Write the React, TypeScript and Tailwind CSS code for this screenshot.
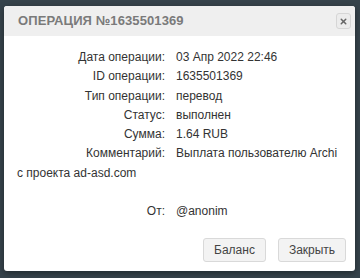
import { X } from "lucide-react";

export default function App() {
  const rows = [
    { label: "Дата операции:", value: "03 Апр 2022 22:46" },
    { label: "ID операции:", value: "1635501369" },
    { label: "Тип операции:", value: "перевод" },
    { label: "Статус:", value: "выполнен" },
    { label: "Сумма:", value: "1.64 RUB" },
    { label: "Комментарий:", value: "Выплата пользователю Archi с проекта ad-asd.com" },
  ];

  return (
    <div className="w-[360px] h-[278px] bg-[#36434b] pt-[6px] pl-[4px] overflow-hidden" style={{ fontFamily: '"Liberation Sans", Arial, sans-serif' }}>
      <div className="w-[351px] h-[265px] bg-white rounded-[3px] flex flex-col shadow-[0_2px_6px_rgba(0,0,0,0.4)]">
        <div className="h-[30px] bg-[#efefef] rounded-t-[3px] flex items-center justify-between pl-[14px] pr-[4px]">
          <span className="text-[13px] font-bold tracking-[0.1px] text-[#7a7a7a] uppercase">Операция №1635501369</span>
          <button className="w-[15px] h-[16px] border border-[#d6d6d6] rounded-[3px] bg-[#ececec] flex items-center justify-center">
            <X className="w-[9px] h-[9px] text-[#666]" strokeWidth={4} />
          </button>
        </div>
        <div className="flex-1 pl-[13px] pr-[14px] pt-[12px] text-[12px] leading-[19.3px] text-[#333]">
          {rows.map((r, i) => (
            <div key={i}>
              <span className="inline-block w-[148px] text-right mr-[11px]">{r.label}</span>
              {r.value}
            </div>
          ))}
          <div className="mt-[19px]">
            <span className="inline-block w-[148px] text-right mr-[11px]">От:</span>
            @anonim
          </div>
        </div>
        <div className="flex justify-end gap-[12px] pr-[9px] pb-[9px]">
          <button className="w-[63px] h-[24px] text-[12px] text-[#444] bg-[#f3f3f3] border border-[#d9d9d9] rounded-[3px]">Баланс</button>
          <button className="w-[68px] h-[24px] text-[12px] text-[#444] bg-[#f3f3f3] border border-[#d9d9d9] rounded-[3px]">Закрыть</button>
        </div>
      </div>
    </div>
  );
}
